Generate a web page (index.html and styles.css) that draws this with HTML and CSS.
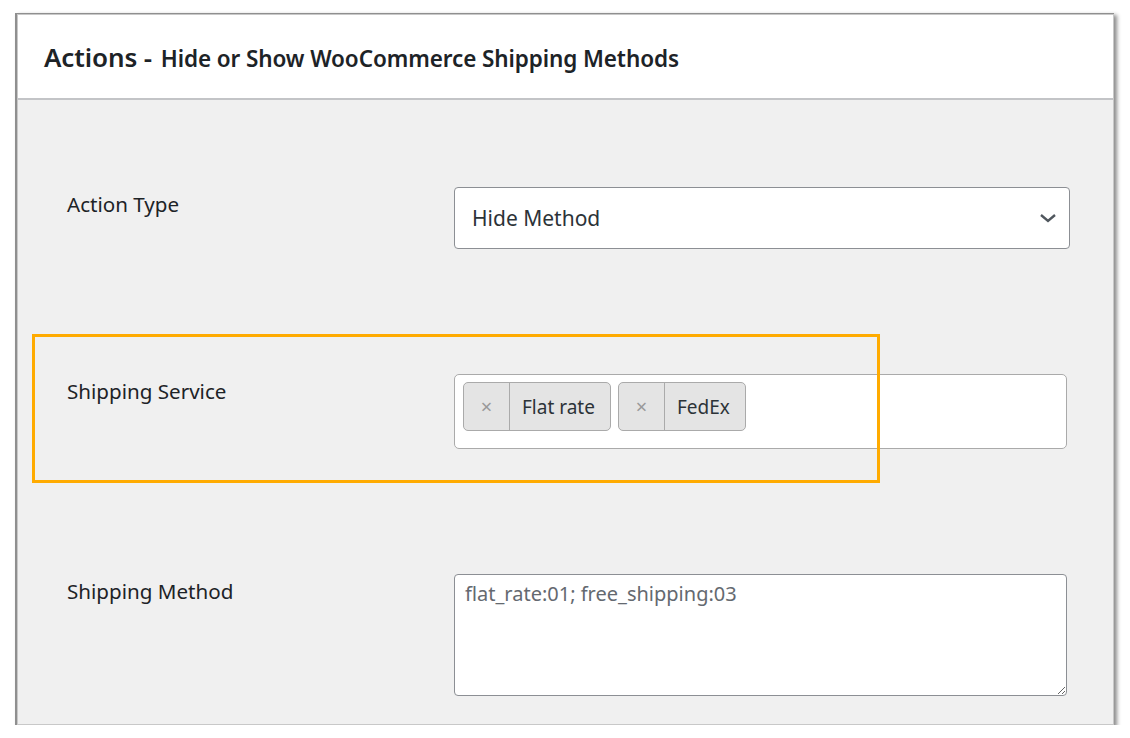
FILE: index.html
```html
<!DOCTYPE html>
<html lang="en">

<head>
  <meta charset="UTF-8" />
  <link rel="stylesheet" href="styles.css">
  <title>Actions</title>
</head>

<body>
  <div class="panel">
    <div class="panel-head">
      <h2><span class="big">Actions -</span> Hide or Show WooCommerce Shipping Methods</h2>
    </div>

    <div class="panel-body">
      <div class="row">
        <label class="label">Action Type</label>
        <div class="select">
          <span>Hide Method</span>
          <svg width="18" height="10" viewBox="0 0 18 10"><path d="M2 2l7 6 7-6" fill="none" stroke="#50575e" stroke-width="2.4"/></svg>
        </div>
      </div>

      <div class="row">
        <label class="label">Shipping Service</label>
        <div class="multi">
          <div class="tag"><span class="tag-x">×</span><span class="tag-text">Flat rate</span></div>
          <div class="tag"><span class="tag-x">×</span><span class="tag-text">FedEx</span></div>
        </div>
      </div>

      <div class="row">
        <label class="label">Shipping Method</label>
        <textarea class="area" placeholder="flat_rate:01; free_shipping:03"></textarea>
      </div>

      <!-- highlight round the shipping service row -->
      <div class="highlight"></div>
    </div>
  </div>
</body>

</html>
```

FILE: styles.css
```css
* {
  box-sizing: border-box;
}

body {
  margin: 0;
  background-color: #fff;
  font-family: "Noto Sans", "Open Sans", sans-serif;
  color: #1d2327;
}

.panel {
  margin: 14px 0 0 17px;
  width: 1097px;
  height: 711px;
  border: 1px solid #c8c8c8;
  box-shadow: -1px 0 0 1px #8f8f8f, 2px 2px 4px 1px rgba(0, 0, 0, 0.45);
  background-color: #f0f0f0;
  overflow: hidden;
}

.panel-head {
  background-color: #fff;
  height: 85px;
  border-bottom: 2px solid #c3c4c7;
  display: flex;
  align-items: center;
  padding: 0 0 0 26px;
}

.panel-head h2 {
  margin: 0;
  font-size: 22.5px;
  font-weight: 600;
  letter-spacing: -0.1px;
}

.panel-head .big {
  font-size: 26px;
  margin-right: 3px;
}

.panel-body {
  position: relative;
  padding: 87px 43px 0 49px;
  display: flex;
  flex-direction: column;
  gap: 125px;
}

.row {
  display: grid;
  grid-template-columns: 387px 1fr;
  align-items: start;
}

.label {
  font-size: 20.6px;
  padding-top: 3px;
}

.select {
  height: 62px;
  border: 1px solid #8c8f94;
  border-radius: 4px;
  background-color: #fff;
  display: flex;
  align-items: center;
  justify-content: space-between;
  padding: 0 12px 0 17px;
  font-size: 21px;
  color: #2c3338;
}

.multi {
  height: 75px;
  width: 613px;
  border: 1px solid #aaa;
  border-radius: 5px;
  background-color: #fff;
  display: flex;
  align-items: flex-start;
  gap: 7px;
  padding: 7px 8px;
}

.tag {
  display: flex;
  height: 49px;
  border: 1px solid #aaa;
  border-radius: 5px;
  background-color: #e4e4e4;
  font-size: 19px;
}

.tag-x {
  width: 46px;
  border-right: 1px solid #aaa;
  color: #999;
  font-size: 20px;
  display: flex;
  align-items: center;
  justify-content: center;
}

.tag-text {
  display: flex;
  align-items: center;
  padding: 0 15px 0 12px;
  color: #2c3338;
}

.area {
  width: 613px;
  height: 122px;
  border: 1px solid #8c8f94;
  border-radius: 4px;
  background-color: #fff;
  font-family: inherit;
  font-size: 20px;
  padding: 5px 10px;
  resize: both;
}

.area::placeholder {
  color: #646970;
}

.highlight {
  position: absolute;
  left: 14px;
  top: 234px;
  width: 848px;
  height: 149px;
  border: 3px solid #ffab00;
  pointer-events: none;
}
```
